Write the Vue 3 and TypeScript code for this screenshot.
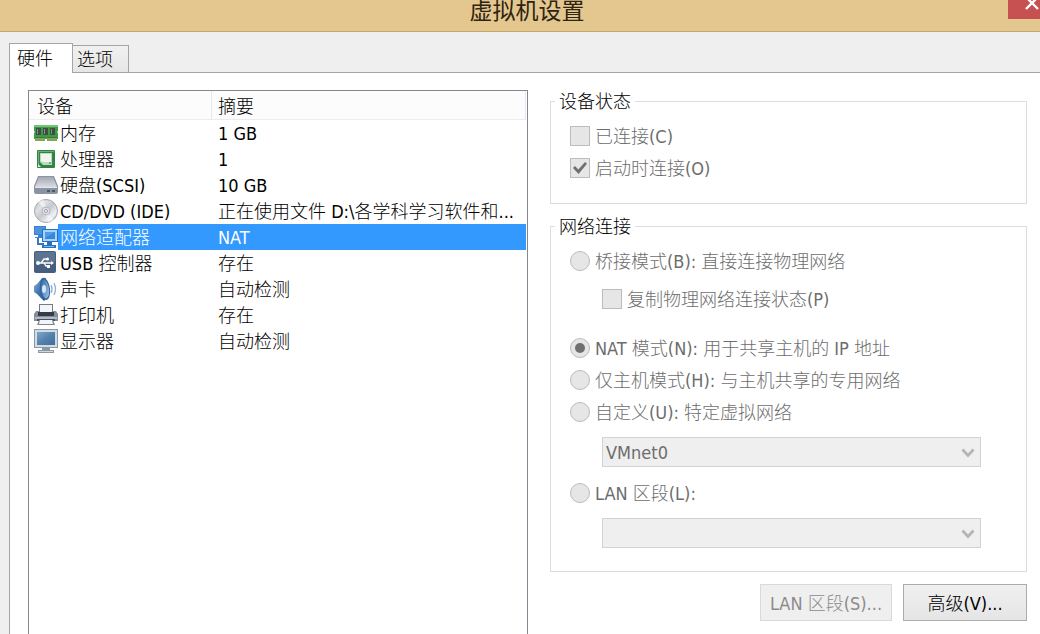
<script setup lang="ts">
import { ref } from 'vue'

interface Device {
  icon: string
  name: string
  summary: string
}

const devices: Device[] = [
  { icon: 'memory', name: '内存', summary: '1 GB' },
  { icon: 'cpu', name: '处理器', summary: '1' },
  { icon: 'disk', name: '硬盘(SCSI)', summary: '10 GB' },
  { icon: 'cd', name: 'CD/DVD (IDE)', summary: '正在使用文件 D:\\各学科学习软件和...' },
  { icon: 'network', name: '网络适配器', summary: 'NAT' },
  { icon: 'usb', name: 'USB 控制器', summary: '存在' },
  { icon: 'sound', name: '声卡', summary: '自动检测' },
  { icon: 'printer', name: '打印机', summary: '存在' },
  { icon: 'display', name: '显示器', summary: '自动检测' },
]

const selected = ref(4)
const mode = ref('nat')
const connected = ref(false)
const connectAtStart = ref(true)
const replicate = ref(false)
</script>

<template>
  <div class="window">
    <header class="titlebar">
      <h1 class="title">虚拟机设置</h1>
      <button class="close" type="button" aria-label="关闭">
        <svg width="14" height="10" viewBox="0 0 14 10"><path d="M1 -3L13 9M13 -3L1 9" stroke="#fff" stroke-width="2.4" /></svg>
      </button>
    </header>

    <div class="tabs" role="tablist">
      <button class="tab active" type="button" role="tab" aria-selected="true">硬件</button>
      <button class="tab" type="button" role="tab" aria-selected="false">选项</button>
    </div>

    <main class="panel">
      <section class="list">
        <table>
          <colgroup>
            <col class="col-device" />
            <col />
          </colgroup>
          <thead>
            <tr>
              <th>设备</th>
              <th>摘要</th>
            </tr>
          </thead>
          <tbody>
            <tr v-for="(d, i) in devices" :key="d.icon" :class="{ selected: i === selected }" @click="selected = i">
              <td>
                <div class="device">
                  <svg v-if="d.icon === 'memory'" class="icon" viewBox="0 0 24 24">
                    <path d="M0 4H24V10L23 11L24 12V18H0V12L1 11L0 10Z" fill="#3f9a48" />
                    <path d="M0 4H24V6H0Z" fill="#76c47a" />
                    <path d="M2 7H7V14H2ZM9 7H14V14H9ZM16 7H21V14H16Z" fill="#3c4f42" />
                    <path d="M3 8H4V13H3ZM10 8H11V13H10ZM17 8H18V13H17Z" fill="#7d9081" />
                    <path d="M1 16H11V20H1ZM13 16H23V20H13Z" fill="#347c3d" />
                    <path d="M2 17V20M4 17V20M6 17V20M8 17V20M10 17V20M14 17V20M16 17V20M18 17V20M20 17V20M22 17V20" stroke="#d2cf7c" stroke-width="1" />
                  </svg>
                  <svg v-else-if="d.icon === 'cpu'" class="icon" viewBox="0 0 24 24">
                    <rect x="3" y="3" width="18" height="18" rx="1" fill="#2f8541" />
                    <path d="M4 4H20V5H5V20H4Z" fill="#68b573" />
                    <path d="M6 6H18V18H9L6 15Z" fill="#c3d6c4" />
                    <path d="M7 7H17V15H9L7 14Z" fill="#f0f5ef" />
                    <path d="M4 20V17L7 20Z" fill="#e2ecd8" />
                    <circle cx="16" cy="16" r="1" fill="#5b9a66" />
                  </svg>
                  <svg v-else-if="d.icon === 'disk'" class="icon" viewBox="0 0 24 24">
                    <defs>
                      <linearGradient id="diskTop" x1="0" y1="0" x2="0" y2="1">
                        <stop offset="0" stop-color="#a3a8b2" />
                        <stop offset="1" stop-color="#d9dce2" />
                      </linearGradient>
                    </defs>
                    <path d="M4 3H20L24 13V19Q24 21 22 21H2Q0 21 0 19V13Z" fill="#8d95a2" />
                    <path d="M5 4H19L23 14H1Z" fill="url(#diskTop)" />
                    <path d="M1 15H23V19Q23 20 22 20H2Q1 20 1 19Z" fill="#8a93a1" />
                    <path d="M1 14.500H23" stroke="#e2e5e9" />
                    <path d="M13 17H16V19H13ZM18 17H21V19H18Z" fill="#4e5764" />
                  </svg>
                  <svg v-else-if="d.icon === 'cd'" class="icon" viewBox="0 0 24 24">
                    <defs>
                      <linearGradient id="disc" x1="0" y1="0" x2="1" y2="1">
                        <stop offset="0" stop-color="#b9bcc1" />
                        <stop offset=".3" stop-color="#dfe1e5" />
                        <stop offset=".5" stop-color="#c6c9cd" />
                        <stop offset=".75" stop-color="#eff0f2" />
                        <stop offset="1" stop-color="#a6aab0" />
                      </linearGradient>
                    </defs>
                    <circle cx="12" cy="12" r="11.500" fill="url(#disc)" stroke="#a4a8af" />
                    <path d="M12 12L4 3A12 12 0 0 1 10 1ZM12 12L20 21A12 12 0 0 1 14 23Z" fill="#f6f7f8" opacity=".7" />
                    <circle cx="12" cy="12" r="4" fill="#dfe1e4" stroke="#b5b9bf" />
                    <circle cx="12" cy="12" r="1.500" fill="#fff" stroke="#989da4" />
                  </svg>
                  <svg v-else-if="d.icon === 'network'" class="icon" viewBox="0 0 24 24">
                    <path d="M0 1H12V10H8V12H10V13H1V12H4V10H0Z" fill="#3a81c9" />
                    <path d="M1 2H11V9H1Z" fill="#4a94df" />
                    <path d="M4 13V19H10" fill="none" stroke="#3479c2" stroke-width="2" />
                    <path d="M8 4H24V17H18V20H22V23H8V20H13V17H8Z" fill="#2b71bb" />
                    <path d="M9 5H23V16H9Z" fill="#a9d3fb" />
                    <path d="M11 7H21V14H11Z" fill="#3388dd" />
                    <path d="M11 7H21L11 13Z" fill="#4c9dec" />
                    <path d="M10 21H20V22H10Z" fill="#7bb8f2" />
                  </svg>
                  <svg v-else-if="d.icon === 'usb'" class="icon" viewBox="0 0 24 24">
                    <rect x="0" y="0" width="22" height="22" rx="2" fill="#465e7f" />
                    <rect x="1" y="1" width="20" height="10" rx="1" fill="#5c7392" />
                    <g fill="none" stroke="#fff" stroke-width="1.300">
                      <path d="M4 12H18M7 12L10 8H13M10 12L12 15H15" />
                    </g>
                    <circle cx="4" cy="12" r="2" fill="#fff" />
                    <circle cx="13.500" cy="8" r="1.500" fill="#fff" />
                    <path d="M17 10L20 12L17 14ZM13 14H16V17H13Z" fill="#fff" />
                  </svg>
                  <svg v-else-if="d.icon === 'sound'" class="icon" viewBox="0 0 24 24">
                    <defs>
                      <linearGradient id="cone" x1="0" y1="0" x2="1" y2="1">
                        <stop offset="0" stop-color="#8fb6dc" />
                        <stop offset=".5" stop-color="#3f77b0" />
                        <stop offset="1" stop-color="#1f4f87" />
                      </linearGradient>
                      <linearGradient id="coneInner" x1="0" y1="0" x2="1" y2="1">
                        <stop offset="0" stop-color="#2a5d98" />
                        <stop offset="1" stop-color="#a9cbea" />
                      </linearGradient>
                    </defs>
                    <path d="M0 9L3 7L8 1Q12 0 12 2V22L10 24L3 17L0 15Z" fill="url(#cone)" />
                    <ellipse cx="11" cy="12" rx="5" ry="11" fill="#2d639f" transform="rotate(-8 11 12)" />
                    <ellipse cx="11" cy="12" rx="4" ry="9.500" fill="url(#coneInner)" transform="rotate(-8 11 12)" />
                    <ellipse cx="10" cy="12" rx="2" ry="4" fill="#d6e7f6" />
                    <path d="M17 8Q19 12 17 16M20 6Q23 12 20 18" fill="none" stroke="#8fb0cf" stroke-width="1.300" />
                  </svg>
                  <svg v-else-if="d.icon === 'printer'" class="icon" viewBox="0 0 24 24">
                    <path d="M5 1H19V10H5Z" fill="#737b88" />
                    <path d="M6 2H18V10H6Z" fill="#f3f5f7" />
                    <path d="M2 8H5V11H19V8H22L24 11V18H0V11Z" fill="#858e9d" />
                    <path d="M1 14H23V16H1Z" fill="#b3bac5" />
                    <path d="M4 9H20V13H4Z" fill="#343c49" />
                    <path d="M3 16H21V18H3Z" fill="#49515e" />
                    <path d="M5 17H19L21 22H3Z" fill="#7d8795" />
                    <path d="M6 17H18L19 21H5Z" fill="#f2f4f8" />
                  </svg>
                  <svg v-else class="icon" viewBox="0 0 24 24">
                    <defs>
                      <linearGradient id="screen" x1="0" y1="0" x2="1" y2="1">
                        <stop offset="0" stop-color="#7fa5c8" />
                        <stop offset=".5" stop-color="#5482ad" />
                        <stop offset="1" stop-color="#3e6e9b" />
                      </linearGradient>
                    </defs>
                    <path d="M0 0H24V19H0Z" fill="#8b98a5" />
                    <path d="M1 1H23V18H1Z" fill="#d3dce3" />
                    <path d="M3 3H21V16H3Z" fill="url(#screen)" />
                    <path d="M8 19H16V21H20V24H4V21H8Z" fill="#8b98a5" />
                    <path d="M5 22.500H19" stroke="#d0d7df" />
                  </svg>
                  <span class="name">{{ d.name }}</span>
                </div>
              </td>
              <td class="summary">{{ d.summary }}</td>
            </tr>
          </tbody>
        </table>
      </section>

      <section class="settings">
        <fieldset class="status">
          <legend>设备状态</legend>
          <label class="row"><input v-model="connected" type="checkbox" disabled /><span>已连接(C)</span></label>
          <label class="row"><input v-model="connectAtStart" type="checkbox" disabled /><span>启动时连接(O)</span></label>
        </fieldset>

        <fieldset class="connection">
          <legend>网络连接</legend>
          <label class="row"><input v-model="mode" type="radio" name="mode" value="bridged" disabled /><span>桥接模式(B): 直接连接物理网络</span></label>
          <label class="row sub"><input v-model="replicate" type="checkbox" disabled /><span>复制物理网络连接状态(P)</span></label>
          <label class="row nat"><input v-model="mode" type="radio" name="mode" value="nat" disabled /><span>NAT 模式(N): 用于共享主机的 IP 地址</span></label>
          <label class="row"><input v-model="mode" type="radio" name="mode" value="host" disabled /><span>仅主机模式(H): 与主机共享的专用网络</span></label>
          <label class="row"><input v-model="mode" type="radio" name="mode" value="custom" disabled /><span>自定义(U): 特定虚拟网络</span></label>
          <div class="combo">
            <select aria-label="特定虚拟网络" disabled>
              <option>VMnet0</option>
            </select>
            <svg class="chevron" width="14" height="10" viewBox="0 0 14 10"><path d="M1.500 1.500L7 7.500L12.500 1.500" fill="none" stroke="#b4b4b4" stroke-width="2.600" /></svg>
          </div>
          <label class="row"><input v-model="mode" type="radio" name="mode" value="lan" disabled /><span>LAN 区段(L):</span></label>
          <div class="combo">
            <select aria-label="LAN 区段" disabled></select>
            <svg class="chevron" width="14" height="10" viewBox="0 0 14 10"><path d="M1.500 1.500L7 7.500L12.500 1.500" fill="none" stroke="#b4b4b4" stroke-width="2.600" /></svg>
          </div>
        </fieldset>

        <div class="actions">
          <button class="push lan" type="button" disabled>LAN 区段(S)...</button>
          <button class="push" type="button">高级(V)...</button>
        </div>
      </section>
    </main>
  </div>
</template>

<style>
body {
  margin: 0;
  background: #efefef;
}
</style>

<style scoped>
.window {
  box-sizing: border-box;
  min-height: 100vh;
  display: flex;
  flex-direction: column;
  background: #efefef;
  color: #000;
  font-family: "DejaVu Sans Condensed", "Noto Sans CJK SC", sans-serif;
  font-size: 18px;
  font-weight: 300;
  line-height: 22px;
}

button,
select {
  font: inherit;
  color: inherit;
}

.titlebar {
  box-sizing: border-box;
  height: 32px;
  display: grid;
  grid-template-columns: 46px 1fr 32px;
  align-items: start;
  background: #e4c78f;
  border-bottom: 1px solid #c3a56b;
}

.title {
  grid-column: 2;
  margin: 0;
  text-align: center;
  font-size: 23px;
  line-height: 22px;
  font-weight: 400;
  color: #2e2412;
}

.close {
  height: 19px;
  padding: 0 0 0 17px;
  border: 0;
  background: #c75050;
  display: flex;
  align-items: flex-start;
  overflow: hidden;
}

.close svg {
  flex: none;
}

.tabs {
  height: 30px;
  margin: 11px 0 -1px 9px;
  display: flex;
  align-items: flex-end;
  z-index: 1;
}

.tab {
  box-sizing: border-box;
  width: 56px;
  height: 28px;
  padding: 2px 0 0 4px;
  text-align: left;
  border: 1px solid #a5a5a5;
  border-left: 0;
  background: linear-gradient(#f1f1f1, #e6e6e6);
}

.tab.active {
  width: 64px;
  height: 30px;
  padding: 0 0 0 7px;
  border-left: 1px solid #a5a5a5;
  border-bottom: 0;
  background: #fff;
}

.panel {
  flex: 1;
  margin-left: 9px;
  padding: 17px 13px 0 18px;
  display: grid;
  grid-template-columns: 500fr 477fr;
  column-gap: 22px;
  background: #fff;
  border-top: 1px solid #a5a5a5;
  border-left: 1px solid #a5a5a5;
}

.list {
  padding-right: 1px;
  border: 1px solid #828790;
  border-bottom: 0;
}

table {
  width: 100%;
  table-layout: fixed;
  border-collapse: separate;
  border-spacing: 0;
}

.col-device {
  width: 183px;
}

th {
  box-sizing: border-box;
  height: 29px;
  padding: 4px 0 0 8px;
  text-align: left;
  font-weight: 300;
  background: #fcfcfc;
  border-right: 1px solid #e3e8ee;
  border-bottom: 1px solid #ececec;
}

th + th {
  padding-left: 6px;
}

td {
  height: 26px;
  padding: 0;
}

.device {
  height: 26px;
  padding-left: 5px;
  display: flex;
  align-items: center;
}

.icon {
  flex: none;
  width: 24px;
  height: 24px;
}

.name {
  flex: 1;
  padding: 2px 0 0 2px;
  line-height: 24px;
  white-space: nowrap;
}

.summary {
  box-sizing: border-box;
  padding: 2px 0 0 6px;
  line-height: 24px;
  overflow: hidden;
  white-space: nowrap;
}

.selected .name,
.selected .summary {
  color: #fff;
  background: #3399ff;
}

.settings {
  min-width: 0;
}

fieldset {
  min-width: 0;
  margin: 0 0 12px;
  border: 1px solid #dcdcdc;
}

.status {
  margin-bottom: 11px;
  padding: 8px 19px 19px;
}

.connection {
  padding: 8px 19px 23px;
}

legend {
  box-sizing: border-box;
  height: 22px;
  margin-left: -15px;
  padding: 1px 4px 0;
}

.row {
  height: 32px;
  display: flex;
  align-items: center;
  gap: 5px;
  color: #6d6d6d;
  white-space: nowrap;
}

.row span {
  padding-top: 2px;
}

.sub {
  margin: 6px 0 0 32px;
}

.nat {
  margin-top: 17px;
}

input {
  appearance: none;
  box-sizing: border-box;
  flex: none;
  width: 20px;
  height: 20px;
  margin: 0;
  display: grid;
  place-items: center;
  border: 1px solid #bcbcbc;
  background: #e6e6e6;
}

input[type="radio"] {
  border-radius: 50%;
}

input[type="radio"]:checked::after {
  content: "";
  width: 10px;
  height: 10px;
  border-radius: 50%;
  background: #707070;
}

input[type="checkbox"]:checked::after {
  content: "";
  width: 14px;
  height: 12px;
  background: #707070;
  clip-path: polygon(0 50%, 14% 34%, 38% 62%, 86% 0, 100% 14%, 40% 100%);
}

.combo {
  position: relative;
  margin: 9px 26px 10px 32px;
}

.combo:last-child {
  margin-bottom: 0;
}

select {
  appearance: none;
  box-sizing: border-box;
  display: block;
  width: 100%;
  height: 30px;
  padding: 2px 24px 0 3px;
  border: 1px solid #d2d2d2;
  border-radius: 0;
  background: #efefef;
  color: #6d6d6d;
  opacity: 1;
}

.chevron {
  position: absolute;
  right: 6px;
  top: 11px;
}

.actions {
  display: flex;
  justify-content: flex-end;
  gap: 11px;
}

.push {
  box-sizing: border-box;
  width: 124px;
  height: 37px;
  padding: 2px 0 0;
  border: 1px solid #acacac;
  background: linear-gradient(#f0f0f0, #e5e5e5);
}

.push.lan {
  width: 132px;
  border-color: #d9d9d9;
  background: #efefef;
  color: #8b8b8b;
}
</style>
